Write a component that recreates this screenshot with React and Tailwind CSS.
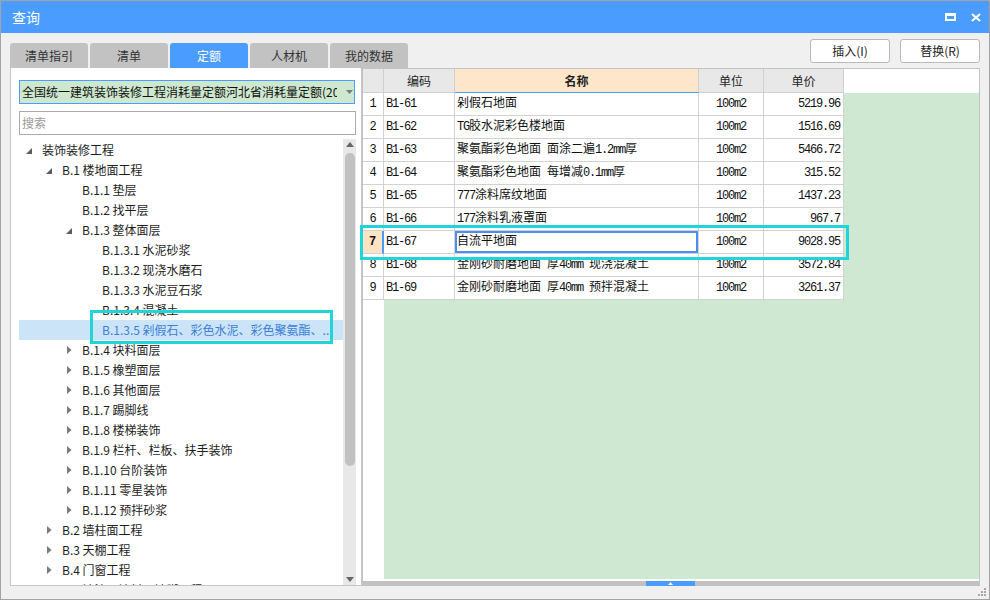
import React from "react";

const tabs = ["清单指引", "清单", "定额", "人材机", "我的数据"];

const tree = [
  { l: 0, t: "装饰装修工程", s: "open" },
  { l: 1, t: "B.1 楼地面工程", s: "open" },
  { l: 2, t: "B.1.1 垫层" },
  { l: 2, t: "B.1.2 找平层" },
  { l: 2, t: "B.1.3 整体面层", s: "open" },
  { l: 3, t: "B.1.3.1 水泥砂浆" },
  { l: 3, t: "B.1.3.2 现浇水磨石" },
  { l: 3, t: "B.1.3.3 水泥豆石浆" },
  { l: 3, t: "B.1.3.4 混凝土" },
  { l: 3, t: "B.1.3.5 剁假石、彩色水泥、彩色聚氨酯、..", sel: true },
  { l: 2, t: "B.1.4 块料面层", s: "closed" },
  { l: 2, t: "B.1.5 橡塑面层", s: "closed" },
  { l: 2, t: "B.1.6 其他面层", s: "closed" },
  { l: 2, t: "B.1.7 踢脚线", s: "closed" },
  { l: 2, t: "B.1.8 楼梯装饰", s: "closed" },
  { l: 2, t: "B.1.9 栏杆、栏板、扶手装饰", s: "closed" },
  { l: 2, t: "B.1.10 台阶装饰", s: "closed" },
  { l: 2, t: "B.1.11 零星装饰", s: "closed" },
  { l: 2, t: "B.1.12 预拌砂浆", s: "closed" },
  { l: 1, t: "B.2 墙柱面工程", s: "closed" },
  { l: 1, t: "B.3 天棚工程", s: "closed" },
  { l: 1, t: "B.4 门窗工程", s: "closed" },
  { l: 1, t: "B.5 油漆、涂料、裱糊工程", s: "closed" },
];

// indent per tree level
const indent = ["pl-[7px]", "pl-[27px]", "pl-[47px]", "pl-[67px]"];

const rows = [
  ["B1-61", "剁假石地面", "5219.96"],
  ["B1-62", "TG胶水泥彩色楼地面", "1516.69"],
  ["B1-63", "聚氨酯彩色地面 面涂二遍1.2mm厚", "5466.72"],
  ["B1-64", "聚氨酯彩色地面 每增减0.1mm厚", "315.52"],
  ["B1-65", "777涂料席纹地面", "1437.23"],
  ["B1-66", "177涂料乳液罩面", "967.7"],
  ["B1-67", "自流平地面", "9028.95"],
  ["B1-68", "金刚砂耐磨地面 厚40mm 现浇混凝土", "3572.84"],
  ["B1-69", "金刚砂耐磨地面 厚40mm 预拌混凝土", "3261.37"],
];

// ascii runs get squeezed so they look like a narrow song-style font
function Mono({ text }) {
  return (
    <span className="whitespace-pre">
      {text.split(/([\x00-\x7f]+)/).map((p, i) =>
        /^[\x00-\x7f]+$/.test(p) ? (
          <span key={i} className="tracking-[-1.2px]">
            {p}
          </span>
        ) : (
          <span key={i}>{p}</span>
        )
      )}
    </span>
  );
}

function Arrow({ open }) {
  if (open)
    return (
      <svg width="6" height="6" className="mt-[1px]">
        <path d="M6 0 L6 6 L0 6 Z" fill="#5c5c5c" />
      </svg>
    );
  return (
    <svg width="5" height="8" className="ml-[1px]">
      <path d="M0 0 L4.5 4 L0 8 Z" fill="#7a7a7a" />
    </svg>
  );
}

export default function App() {
  return (
    <div className="relative w-[990px] h-[600px] border border-[#a3a3a3] bg-[#f0f0f0] flex flex-col overflow-hidden font-['Noto_Sans_CJK_SC',sans-serif] text-[12px] text-[#1e1e1e]">
      {/* Title bar */}
      <div className="h-[32px] shrink-0 bg-[#4a9cff] flex items-center justify-between pl-[11px] pr-[8px]">
        <span className="text-white text-[14px] leading-none">查询</span>
        <div className="flex items-center gap-[15px]">
          <svg width="11" height="8">
            <rect x="1" y="1" width="9" height="6" fill="none" stroke="white" strokeWidth="2" />
            <rect x="0" y="0" width="11" height="3" fill="white" />
          </svg>
          <svg width="10" height="9">
            <path d="M1 1 L9 8 M9 1 L1 8" stroke="white" strokeWidth="2.2" />
          </svg>
        </div>
      </div>

      {/* Body */}
      <div className="flex-1 flex flex-col pl-[9px] pr-[9px]">
        <div className="h-[35px] shrink-0 flex justify-between">
          <div className="flex gap-[2px] self-end">
            {tabs.map((t, i) => (
              <div
                key={t}
                className={
                  i === 2
                    ? "w-[78px] h-[25px] rounded-t-[3px] bg-[#4a9cff] text-white flex items-center justify-center"
                    : "w-[78px] h-[25px] rounded-t-[3px] bg-[#c2c2c2] text-[#333] flex items-center justify-center"
                }
              >
                {t}
              </div>
            ))}
          </div>
          <div className="flex gap-[10px] pt-[6px]">
            <button className="w-[80px] h-[24px] bg-white border border-[#b9b9b9] rounded-[3px] text-[#222]">
              插入(I)
            </button>
            <button className="w-[80px] h-[24px] bg-white border border-[#b9b9b9] rounded-[3px] text-[#222]">
              替换(R)
            </button>
          </div>
        </div>

        <div className="h-[518px] shrink-0 flex">
          {/* Left panel */}
          <div className="w-[352px] bg-white border-l border-r border-b border-[#c6c6c6] flex flex-col pl-[8px] pr-[5px] pt-[12px]">
            <div className="w-[336px] h-[24px] border border-[#4a9cff] bg-[#cde8cf] flex items-center pl-[2px]">
              <div className="w-[315px] overflow-hidden whitespace-nowrap text-[#111]">
                全国统一建筑装饰装修工程消耗量定额河北省消耗量定额(2012)
              </div>
              <svg width="7" height="4" className="ml-[9px]">
                <path d="M0 0 L7 0 L3.5 4 Z" fill="#7b7b7b" />
              </svg>
            </div>
            <div className="mt-[7px] h-[24px] border border-[#ababab] flex items-center pl-[2px] text-[#9a9a9a]">
              搜索
            </div>
            <div className="mt-[4px] flex-1 flex min-h-0">
              <div className="flex-1 pt-[1px] overflow-hidden">
                {tree.map((n, i) => (
                  <div
                    key={i}
                    className={
                      "h-[20px] flex items-center whitespace-nowrap " +
                      indent[n.l] +
                      (n.sel ? " bg-[#cce4f8] text-[#3a80d8]" : "")
                    }
                  >
                    <div className="w-[16px] flex items-center">
                      {n.s && <Arrow open={n.s === "open"} />}
                    </div>
                    <span>{n.t}</span>
                  </div>
                ))}
              </div>
              <div className="w-[13px] bg-[#e8e8e8] flex flex-col items-center pt-[2px] pb-[3px]">
                <svg width="8" height="5" className="mt-[1px]">
                  <path d="M0 5 L4 0 L8 5 Z" fill="#666" />
                </svg>
                <div className="mt-[6px] w-[10px] h-[313px] rounded-full bg-[#c1c1c1]" />
                <div className="flex-1" />
                <svg width="8" height="5">
                  <path d="M0 0 L8 0 L4 5 Z" fill="#666" />
                </svg>
              </div>
            </div>
          </div>

          {/* Grid */}
          <div className="w-[618px] bg-white border-l border-t border-r border-[#c3c3c3] flex flex-col">
            <div className="h-[24px] shrink-0 flex">
              <div className="w-[21px] bg-[#e8e8e8] border-r border-b border-[#cfcfcf]" />
              <div className="w-[71px] bg-[#e8e8e8] border-r border-b border-[#cfcfcf] flex items-center justify-center">
                编码
              </div>
              <div className="w-[244px] bg-[#fde6c9] border-r border-[#cfcfcf] border-b border-b-[#4a9cff] flex items-center justify-center font-bold">
                名称
              </div>
              <div className="w-[65px] bg-[#e8e8e8] border-r border-b border-[#cfcfcf] flex items-center justify-center">
                单位
              </div>
              <div className="w-[80px] bg-[#e8e8e8] border-r border-b border-[#cfcfcf] flex items-center justify-center">
                单价
              </div>
              <div className="flex-1" />
            </div>

            <div className="flex-1 flex flex-col bg-[linear-gradient(to_right,white_21px,#cee8d1_21px)] font-['Liberation_Mono','Noto_Sans_CJK_SC',monospace] text-[12px] text-[#111]">
              {rows.map((r, i) => {
                const sel = i === 6;
                return (
                  <div key={i} className="h-[23px] flex">
                    <div
                      className={
                        sel
                          ? "w-[21px] bg-[#fde3c3] border-b border-[#d2d2d2] border-r-2 border-r-[#4a9cff] flex items-center justify-center font-bold"
                          : "w-[21px] bg-white border-r border-b border-[#d2d2d2] flex items-center justify-center"
                      }
                    >
                      {i + 1}
                    </div>
                    <div className="w-[71px] bg-white border-r border-b border-[#d2d2d2] flex items-center pl-[2px]">
                      <Mono text={r[0]} />
                    </div>
                    <div
                      className={
                        "w-[244px] bg-white border-r border-b border-[#d2d2d2] flex items-center pl-[2px] whitespace-nowrap overflow-hidden" +
                        (sel ? " shadow-[inset_0_0_0_2px_#4a90f0]" : "")
                      }
                    >
                      <Mono text={r[1]} />
                    </div>
                    <div className="w-[65px] bg-white border-r border-b border-[#d2d2d2] flex items-center justify-center">
                      <Mono text="100m2" />
                    </div>
                    <div className="w-[80px] bg-white border-r border-b border-[#d2d2d2] flex items-center justify-end pr-[3px]">
                      <Mono text={r[2]} />
                    </div>
                  </div>
                );
              })}
            </div>
            <div className="h-[2px] shrink-0 bg-white" />
            <div className="h-[5px] shrink-0 bg-[#c1c1c1] flex">
              <div className="ml-[283px] w-[49px] h-full bg-[#4a9cff] flex items-center justify-center">
                <svg width="5" height="3">
                  <path d="M0 3 L2.5 0 L5 3 Z" fill="white" />
                </svg>
              </div>
            </div>
          </div>
        </div>
      </div>

      {/* resize grip */}
      <svg width="9" height="9" className="absolute right-[2px] bottom-[2px]">
        <rect x="6" y="0" width="2" height="2" fill="#a8a8a8" />
        <rect x="3" y="3" width="2" height="2" fill="#a8a8a8" />
        <rect x="6" y="3" width="2" height="2" fill="#a8a8a8" />
        <rect x="0" y="6" width="2" height="2" fill="#a8a8a8" />
        <rect x="3" y="6" width="2" height="2" fill="#a8a8a8" />
        <rect x="6" y="6" width="2" height="2" fill="#a8a8a8" />
      </svg>

      {/* highlight frames */}
      <div className="absolute left-[89px] top-[309px] w-[243px] h-[34px] border-[3px] border-[#1fd5d7]" />
      <div className="absolute left-[359px] top-[224px] w-[489px] h-[35px] border-[3px] border-[#1fd5d7]" />
    </div>
  );
}
